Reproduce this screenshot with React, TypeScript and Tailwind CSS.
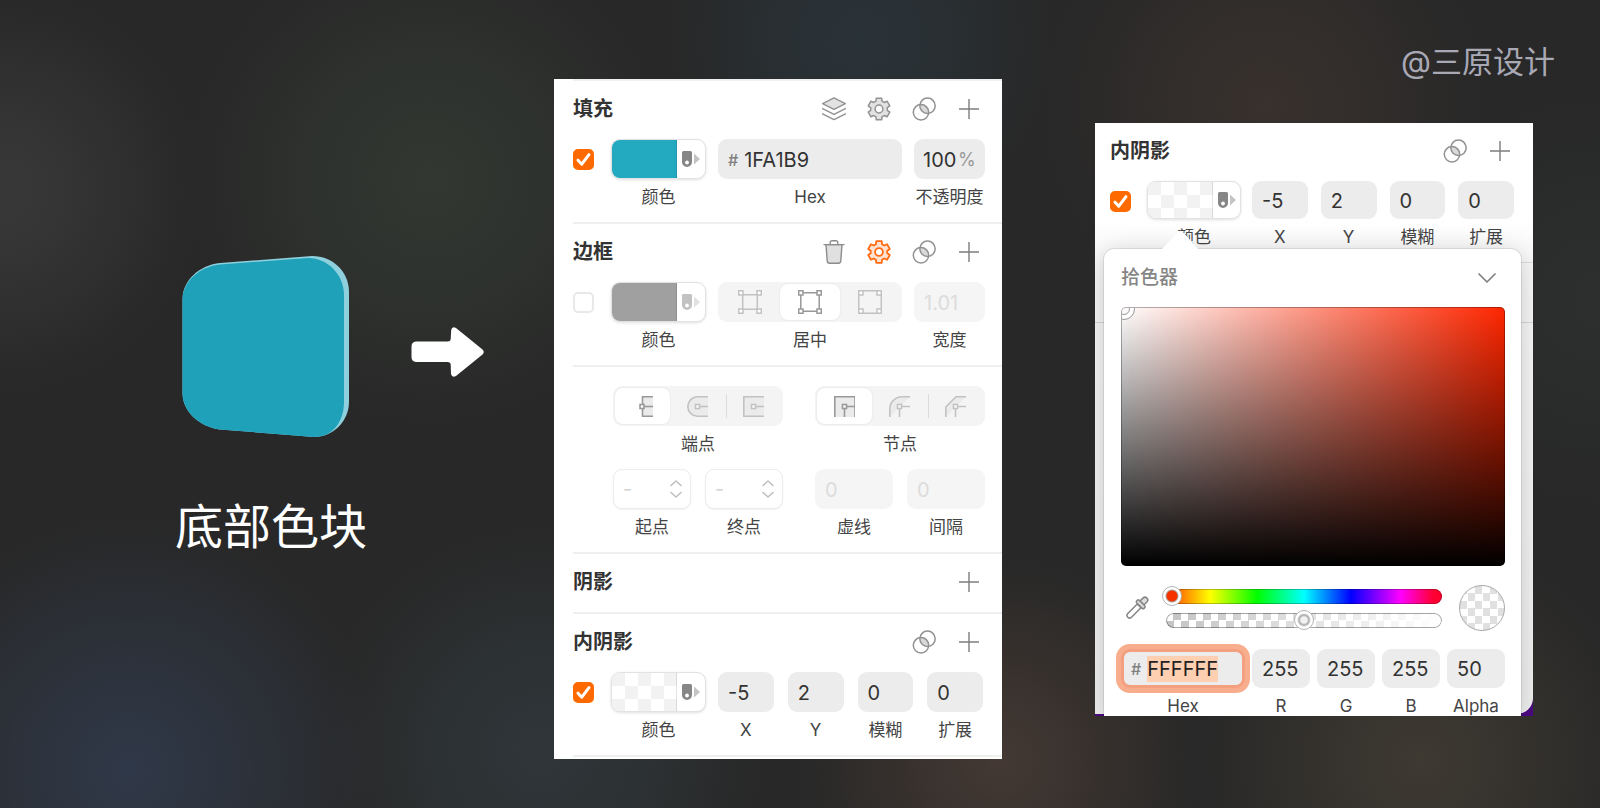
import type { ReactNode } from "react";
import clsx from "clsx";

const gearPath =
  Array.from({ length: 6 }, (_, i) =>
    [
      [-21, 8.4],
      [-14, 11.2],
      [14, 11.2],
      [21, 8.4]
    ]
      .map(([offset, radius], j) => {
        const angle = ((i * 60 + offset) * Math.PI) / 180;
        const x = (12 + Math.sin(angle) * radius).toFixed(2);
        const y = (12 - Math.cos(angle) * radius).toFixed(2);
        return `${i === 0 && j === 0 ? "M" : "L"}${x} ${y}`;
      })
      .join(" ")
  ).join(" ") + " Z";

function LayersIcon() {
  return (
    <svg viewBox="0 0 24 24" className="size-6" fill="none" stroke="#929292" strokeWidth="1.4" strokeLinejoin="round" strokeLinecap="round">
      <path d="M12 .8 23.4 6.6 12 12.4.6 6.6Z" fill="#e2e2e2" />
      <path d="M.6 11.6 12 17.4l11.4-5.800" />
      <path d="M.6 16.8 12 22.600l11.400-5.800" />
    </svg>
  );
}

function GearIcon({ active = false }: { active?: boolean }) {
  return (
    <svg
      viewBox="0 0 24 24"
      className={clsx("size-6", active ? "text-[#ff6a13]" : "text-[#929292]")}
      stroke="currentColor"
      strokeWidth={active ? 1.8 : 1.5}
      strokeLinejoin="round"
    >
      <path d={gearPath} fill={active ? "#ffe3d0" : "#e2e2e2"} />
      <circle cx="12" cy="12" r="3.9" fill="#fff" />
    </svg>
  );
}

function BlendIcon() {
  return (
    <svg viewBox="0 0 24 24" className="size-6" fill="none" stroke="#929292" strokeWidth="1.5">
      <path d="M7.9 7.7a7.700 7.700 0 0 1 8.700 8.700 7.700 7.700 0 0 1-8.700-8.700Z" fill="#d9d9d9" stroke="none" />
      <circle cx="15.500" cy="8.800" r="7.700" />
      <circle cx="9" cy="15.300" r="7.700" />
    </svg>
  );
}

function PlusIcon() {
  return (
    <svg viewBox="0 0 24 24" className="size-6" stroke="#7d7d7d" strokeWidth="1.4">
      <path d="M2 12h20M12 2v20" />
    </svg>
  );
}

function TrashIcon() {
  return (
    <svg viewBox="0 0 24 24" className="size-6" fill="none" stroke="#8c8c8c" strokeWidth="1.4" strokeLinejoin="round" strokeLinecap="round">
      <path d="M4 4.6h16l-1.2 16.2a2.4 2.4 0 0 1-2.4 2.4H7.6a2.4 2.4 0 0 1-2.4-2.4Z" fill="#e0e0e0" />
      <path d="M2 4.6h20M8.2 4.4V2.6A1.8 1.8 0 0 1 10 .8h4a1.8 1.8 0 0 1 1.8 1.8v1.8" />
    </svg>
  );
}

function StyleIcon() {
  return (
    <svg viewBox="0 0 18 18" className="size-[18px]">
      <path d="M0 2.5A1.5 1.5 0 0 1 1.5 1h7A1.5 1.5 0 0 1 10 2.5V12a5 5 0 0 1-10 0Z" fill="#868686" />
      <circle cx="5" cy="12.5" r="1.9" fill="#fff" />
      <path d="M12 3.5v11L18 9Z" fill="#c4c4c4" />
    </svg>
  );
}

// line: how far the frame sits from the outer edge of the corner nodes
function AlignIcon({ line }: { line: number }) {
  const far = 24 - line;
  return (
    <svg viewBox="0 0 24 24" className="size-6" fill="#fff" stroke="currentColor" strokeWidth="1.5">
      <path d={`M${line} ${line}H${far}V${far}H${line}Z`} fill="none" />
      <path d="M.7.7H5V5H.7ZM19 .7h4.3V5H19ZM.7 19H5v4.3H.7ZM19 19h4.3v4.3H19Z" />
    </svg>
  );
}

function EdgeIcon({ outline, node, lines }: { outline: string; node: [number, number]; lines: string }) {
  return (
    <svg viewBox="0 0 21 21" className="size-[21px]" fill="none" stroke="currentColor" strokeWidth="1.6">
      <path d={outline} fill="#ebebeb" />
      <path d={lines} />
      <rect x={node[0]} y={node[1]} width="4" height="4" fill="#fff" />
    </svg>
  );
}

const joinLines = "M12.5 10.500H21M10.500 12.500V21";

const capIcons = [
  { name: "平头", icon: <EdgeIcon outline="M21 .8H10.500v19.400H21" node={[8, 8.5]} lines="M12 10.500h9" /> },
  { name: "圆头", icon: <EdgeIcon outline="M21 .8H10.500a9.700 9.700 0 0 0 0 19.400H21" node={[8.5, 8.5]} lines="M12.500 10.500H21" /> },
  { name: "方头", icon: <EdgeIcon outline="M21 .8H.8v19.400H21" node={[8.5, 8.5]} lines="M12.500 10.500H21" /> }
];

const joinIcons = [
  { name: "尖角", icon: <EdgeIcon outline="M.8 21V.8H21V21" node={[8.5, 8.5]} lines={joinLines} /> },
  { name: "圆角", icon: <EdgeIcon outline="M.8 21V13A12.200 12.200 0 0 1 13 .8h8" node={[8.5, 8.5]} lines={joinLines} /> },
  { name: "斜角", icon: <EdgeIcon outline="M.8 21V11L11 .8h10" node={[8.5, 8.5]} lines={joinLines} /> }
];

const alignIcons = [
  { name: "内部", icon: <AlignIcon line={4.7} /> },
  { name: "居中", icon: <AlignIcon line={2.8} /> },
  { name: "外部", icon: <AlignIcon line={0.7} /> }
];

function Caption({ children }: { children: ReactNode }) {
  return (
    <span className="mt-2 block text-center text-[17px] leading-5 whitespace-nowrap text-[#444]">
      {children}
    </span>
  );
}

function SectionHeader({ title, children }: { title: string; children: ReactNode }) {
  return (
    <div className="flex h-6 items-center justify-between">
      <h2 className="text-xl leading-6 font-bold text-[#333]">{title}</h2>
      <div className="flex gap-[21px]">{children}</div>
    </div>
  );
}

function IconButton({ label, children }: { label: string; children: ReactNode }) {
  return (
    <button type="button" aria-label={label} className="size-6">
      {children}
    </button>
  );
}

function Tick({ label, checked = false }: { label: string; checked?: boolean }) {
  return (
    <span className="relative my-[10px] size-[21px] shrink-0">
      <input
        type="checkbox"
        aria-label={label}
        defaultChecked={checked}
        className="peer block size-[21px] appearance-none rounded-[5px] border-2 border-[#e8e8e8] bg-white checked:border-[#ff6a00] checked:bg-[#ff6a00]"
      />
      <svg
        viewBox="0 0 21 21"
        className="pointer-events-none absolute inset-0 hidden size-[21px] peer-checked:block"
        fill="none"
        stroke="#fff"
        strokeWidth="3"
        strokeLinecap="round"
        strokeLinejoin="round"
      >
        <path d="M5 11.2 8.8 15.2 16 5.6" />
      </svg>
    </span>
  );
}

function Swatch({ fill, compact = false, disabled = false }: { fill: string; compact?: boolean; disabled?: boolean }) {
  return (
    <label className={clsx("shrink-0", compact ? "w-[94px]" : "w-[95px]")}>
      <button
        type="button"
        disabled={disabled}
        className={clsx(
          "flex w-full overflow-hidden rounded-[9px] border border-[#e2e2e2] bg-white shadow-[0_1px_3px_rgba(0,0,0,0.12)]",
          compact ? "h-[38px]" : "h-10"
        )}
      >
        <span className={clsx("h-full w-[65px] border-r border-black/10", fill)} />
        <span className={clsx("flex h-full flex-1 items-center justify-center", disabled && "opacity-50")}>
          <StyleIcon />
        </span>
      </button>
      <Caption>颜色</Caption>
    </label>
  );
}

function NumberField({
  label,
  value,
  height = "h-10",
  disabled = false
}: {
  label: string;
  value: string;
  height?: string;
  disabled?: boolean;
}) {
  return (
    <label className="min-w-0">
      <input
        type="text"
        defaultValue={value}
        disabled={disabled}
        className={clsx(
          "block w-full rounded-[9px] px-[10px] pt-px text-xl",
          height,
          disabled ? "bg-[#f5f5f5] text-[#dcdcdc]" : "bg-[#ececec] text-[#333]"
        )}
      />
      <Caption>{label}</Caption>
    </label>
  );
}

function Segmented({
  name,
  label,
  options,
  selected,
  divided = false
}: {
  name: string;
  label: string;
  options: { name: string; icon: ReactNode }[];
  selected: number;
  divided?: boolean;
}) {
  return (
    <fieldset className="min-w-0">
      <div className="grid h-10 grid-cols-3 rounded-[9px] bg-[#f4f4f4] p-[2px]">
        {options.map((option, index) => (
          <label
            key={option.name}
            className={clsx(
              "relative flex items-center justify-center rounded-[8px]",
              index === selected ? "bg-white text-[#999] shadow-[0_0_2px_rgba(0,0,0,0.1)]" : "text-[#c2c2c2]"
            )}
          >
            <input type="radio" name={name} aria-label={option.name} defaultChecked={index === selected} className="sr-only" />
            {divided && index === 2 && <span className="absolute top-1/2 left-0 h-6 w-px -translate-y-1/2 bg-[#dcdcdc]" />}
            {option.icon}
          </label>
        ))}
      </div>
      <Caption>{label}</Caption>
    </fieldset>
  );
}

function ArrowSelect({ label }: { label: string }) {
  return (
    <label className="min-w-0">
      <span className="relative block">
        <select
          disabled
          className="block h-10 w-full appearance-none rounded-[9px] border border-[#ececec] bg-white px-[9px] text-xl text-[#d4d4d4] opacity-100 shadow-[0_1px_2px_rgba(0,0,0,0.06)]"
        >
          <option>-</option>
        </select>
        <svg
          viewBox="0 0 12 18"
          className="pointer-events-none absolute top-[11px] right-[9px] h-[18px] w-3"
          fill="none"
          stroke="#bdbdbd"
          strokeWidth="1.5"
          strokeLinecap="round"
          strokeLinejoin="round"
        >
          <path d="M1 5.500 6 1l5 4.500M1 12.500 6 17l5-4.500" />
        </svg>
      </span>
      <Caption>{label}</Caption>
    </label>
  );
}

const checker =
  "bg-[conic-gradient(#fff_25%,#f2f2f2_0_50%,#fff_0_75%,#f2f2f2_0)] bg-[length:26px_26px]";

const shadowFields = [
  { label: "X", value: "-5" },
  { label: "Y", value: "2" },
  { label: "模糊", value: "0" },
  { label: "扩展", value: "0" }
];

function InnerShadowRow({ compact = false }: { compact?: boolean }) {
  return (
    <div className={clsx("mt-[18px] flex items-start", compact ? "gap-[11px]" : "gap-3")}>
      <div className={clsx("flex items-start", compact ? "gap-4" : "gap-[17px]")}>
        <Tick label="内阴影" checked />
        <Swatch fill={checker} compact={compact} />
      </div>
      <div className={clsx("grid min-w-0 flex-1 grid-cols-4", compact ? "gap-[13px]" : "gap-[14px]")}>
        {shadowFields.map((field) => (
          <NumberField key={field.label} {...field} height={compact ? "h-[38px]" : "h-10"} />
        ))}
      </div>
    </div>
  );
}

function StylePanel() {
  return (
    <section className="bg-white pb-[2px] pl-[19px]">
      <div className="border-t-2 border-[#efefef] pt-4 pb-[15px]">
        <div className="pr-[21px]">
          <SectionHeader title="填充">
            <IconButton label="图层">
              <LayersIcon />
            </IconButton>
            <IconButton label="设置">
              <GearIcon />
            </IconButton>
            <IconButton label="混合">
              <BlendIcon />
            </IconButton>
            <IconButton label="添加">
              <PlusIcon />
            </IconButton>
          </SectionHeader>
        </div>
        <div className="mt-[18px] flex items-start gap-3 pr-[17px]">
          <div className="flex items-start gap-[17px]">
            <Tick label="填充" checked />
            <Swatch fill="bg-[#23a9c0]" />
          </div>
          <label className="min-w-0 flex-1">
            <span className="flex h-10 items-center gap-[6px] rounded-[9px] bg-[#ececec] px-[10px] pt-px">
              <span className="text-base font-medium text-[#808080]">#</span>
              <input type="text" defaultValue="1FA1B9" className="w-full min-w-0 text-xl text-[#333]" />
            </span>
            <Caption>Hex</Caption>
          </label>
          <label className="w-[71px]">
            <span className="flex h-10 items-center rounded-[9px] bg-[#ececec] pt-px pl-[9px]">
              <input type="text" defaultValue="100" className="w-[35px] text-xl text-[#333]" />
              <span className="text-lg text-[#999]">%</span>
            </span>
            <Caption>不透明度</Caption>
          </label>
        </div>
      </div>

      <div className="border-t-2 border-[#efefef] pt-4 pb-[15px]">
        <div className="pr-[21px]">
          <SectionHeader title="边框">
            <IconButton label="删除">
              <TrashIcon />
            </IconButton>
            <IconButton label="设置">
              <GearIcon active />
            </IconButton>
            <IconButton label="混合">
              <BlendIcon />
            </IconButton>
            <IconButton label="添加">
              <PlusIcon />
            </IconButton>
          </SectionHeader>
        </div>
        <div className="mt-[18px] flex items-start gap-3 pr-[17px]">
          <div className="flex items-start gap-[17px]">
            <Tick label="边框" />
            <Swatch fill="bg-[#a0a0a0]" disabled />
          </div>
          <div className="min-w-0 flex-1">
            <Segmented name="align" label="居中" options={alignIcons} selected={1} />
          </div>
          <div className="w-[71px]">
            <NumberField label="宽度" value="1.01" disabled />
          </div>
        </div>
      </div>

      <div className="border-t-2 border-[#efefef] pt-[19px] pr-[17px] pb-[15px] pl-10">
        <div className="grid grid-cols-2 gap-8">
          <Segmented name="cap" label="端点" options={capIcons} selected={0} divided />
          <Segmented name="join" label="节点" options={joinIcons} selected={0} divided />
        </div>
        <div className="mt-[15px] grid grid-cols-2 gap-8">
          <div className="grid grid-cols-2 gap-[14px]">
            <ArrowSelect label="起点" />
            <ArrowSelect label="终点" />
          </div>
          <div className="grid grid-cols-2 gap-[14px]">
            <NumberField label="虚线" value="0" disabled />
            <NumberField label="间隔" value="0" disabled />
          </div>
        </div>
      </div>

      <div className="border-t-2 border-[#efefef] pt-4 pr-[21px] pb-[18px]">
        <SectionHeader title="阴影">
          <IconButton label="添加">
            <PlusIcon />
          </IconButton>
        </SectionHeader>
      </div>

      <div className="border-y-2 border-[#efefef] pt-4 pb-[15px]">
        <div className="pr-[21px]">
          <SectionHeader title="内阴影">
            <IconButton label="混合">
              <BlendIcon />
            </IconButton>
            <IconButton label="添加">
              <PlusIcon />
            </IconButton>
          </SectionHeader>
        </div>
        <div className="pr-[19px]">
          <InnerShadowRow />
        </div>
      </div>
    </section>
  );
}

const sliderClass =
  "-mx-1 block h-[15px] w-[calc(100%+8px)] appearance-none bg-transparent [&::-webkit-slider-thumb]:size-5 [&::-webkit-slider-thumb]:appearance-none [&::-webkit-slider-thumb]:rounded-full [&::-webkit-slider-thumb]:border [&::-webkit-slider-thumb]:border-[#b4b4b4]";

const channels = [
  { label: "R", value: "255" },
  { label: "G", value: "255" },
  { label: "B", value: "255" },
  { label: "Alpha", value: "50" }
];

function ColorPicker() {
  return (
    <div className="relative mt-[2px] mr-3 ml-[9px] rounded-t-[10px] bg-white pt-4 pr-4 pl-[17px] shadow-[0_0_0_1px_rgba(0,0,0,0.08),0_4px_26px_rgba(0,0,0,0.2)]">
      <svg viewBox="0 0 38 20" className="absolute -top-[19px] left-[57px] h-5 w-[38px]" fill="#fff">
        <path d="M0 20 17.5 1.500Q19.500 0 21.500 1.500L38 20Z" />
      </svg>
      <div className="flex h-[26px] items-center justify-between pr-[9px]">
        <h3 className="text-[19px] font-medium text-[#858585]">拾色器</h3>
        <button type="button" aria-label="收起" className="flex h-6 w-[18px] items-center">
          <svg viewBox="0 0 18 10" className="h-[10px] w-[18px]" fill="none" stroke="#808080" strokeWidth="1.7" strokeLinecap="round" strokeLinejoin="round">
            <path d="M1 1l8 8 8-8" />
          </svg>
        </button>
      </div>

      <div className="relative mt-4 h-[259px] overflow-hidden rounded-[5px] border border-black/30 bg-[linear-gradient(to_top,#000,transparent),linear-gradient(to_right,#fff,#ff2600)] bg-origin-border">
        <svg viewBox="0 0 14 14" className="absolute top-0 left-0 size-[14px]" fill="none">
          <circle cx="2" cy="1" r="8" stroke="#fff" strokeWidth="4" />
          <circle cx="2" cy="1" r="10.5" stroke="#9a9a9a" />
          <circle cx="2" cy="1" r="5.5" stroke="#9a9a9a" />
        </svg>
      </div>

      <div className="mt-[19px] flex items-center gap-[17px] pl-1">
        <button type="button" aria-label="吸管" className="size-6">
          <svg viewBox="0 0 24 24" className="size-6" stroke="#858585" strokeWidth="1.5" strokeLinejoin="round">
            <g transform="rotate(45 12 12)">
              <path d="M9.4 9h5.200v13.400a2.600 2.600 0 0 1-5.200 0Z" fill="#fff" />
              <path d="M9.200 5V.8a2.800 2.800 0 0 1 5.600 0V5Z" fill="#dcdcdc" />
              <rect x="6.800" y="5" width="10.400" height="3.600" rx="1.300" fill="#dcdcdc" />
            </g>
          </svg>
        </button>
        <div className="flex min-w-0 flex-1 flex-col gap-[9px]">
          <div className="rounded-full bg-[linear-gradient(to_right,#ff2600,#ff8000_6%,#ff0_16%,#0f0_33%,#0ff_50%,#00f_67%,#f0f_85%,#ff0030_97%)] shadow-[inset_0_0_0_1px_rgba(0,0,0,0.25)]">
            <input
              type="range"
              aria-label="色相"
              min={0}
              max={360}
              defaultValue={0}
              className={clsx(
                sliderClass,
                "[&::-webkit-slider-thumb]:bg-[radial-gradient(circle,#f53200_5px,#aaa_6px,#fff_7px)]"
              )}
            />
          </div>
          <div className="rounded-full bg-[linear-gradient(to_right,transparent,#fff),conic-gradient(#c4c4c4_25%,#fff_0_50%,#c4c4c4_0_75%,#fff_0)] bg-[length:100%_100%,15px_15px] shadow-[inset_0_0_0_1px_rgba(0,0,0,0.35)]">
            <input
              type="range"
              aria-label="不透明度"
              min={0}
              max={100}
              defaultValue={50}
              className={clsx(
                sliderClass,
                "[&::-webkit-slider-thumb]:bg-[radial-gradient(circle,#f2f2f2_3px,#ccc_4px,#aaa_5px,#fff_7px)]"
              )}
            />
          </div>
        </div>
        <span className="size-[46px] rounded-full border border-[#a8a8a8] bg-[conic-gradient(#fff_25%,#e0e0e0_0_50%,#fff_0_75%,#e0e0e0_0)] bg-[length:15px_15px]" />
      </div>

      <div className="mt-[18px] grid grid-cols-[124px_1fr_1fr_1fr_1fr] gap-[7px]">
        <label className="relative z-10">
          <span className="flex h-[39px] items-center gap-[6px] rounded-[9px] border-[3px] border-[#f2a080] bg-[#ececec] pt-px pl-[7px] ring-[5px] ring-[#f8ad8d]">
            <span className="text-base font-medium text-[#808080]">#</span>
            <input
              type="text"
              defaultValue="FFFFFF"
              className="h-[26px] w-[71px] bg-[#ffcfb1] text-xl text-[#222]"
            />
          </span>
          <Caption>Hex</Caption>
        </label>
        {channels.map((channel) => (
          <NumberField key={channel.label} {...channel} height="h-[39px]" />
        ))}
      </div>
    </div>
  );
}

function ShadowPanel() {
  return (
    <section className="relative overflow-hidden bg-[#4b0a82]">
      <div className="absolute inset-x-0 top-0 bottom-[2px] rounded-br-[16px] bg-[linear-gradient(to_bottom,#fff_16%,#f8f8f8_24%,#f0f0f0)]">
        <div className="mt-[139px] ml-[15px] h-px bg-[#dedede]" />
        <div className="mt-[59px] h-px bg-[#d8d8d8]" />
      </div>
      <div className="relative">
        <div className="pt-4 pr-[21px] pl-[15px]">
          <SectionHeader title="内阴影">
            <IconButton label="混合">
              <BlendIcon />
            </IconButton>
            <IconButton label="添加">
              <PlusIcon />
            </IconButton>
          </SectionHeader>
        </div>
        <div className="pr-[19px] pl-[15px]">
          <InnerShadowRow compact />
        </div>
        <ColorPicker />
      </div>
    </section>
  );
}

export default function App() {
  return (
    <main className="grid min-h-screen grid-cols-[554fr_448fr_598fr] bg-[#282828] bg-[radial-gradient(circle_200px_at_0px_190px,#383838,#343434_35%,transparent),radial-gradient(circle_240px_at_430px_180px,#323732,#2f332f_40%,transparent),radial-gradient(circle_190px_at_860px_40px,#293237,#293034_35%,transparent),radial-gradient(circle_220px_at_1265px_105px,#38312e,#332e2c_35%,transparent),radial-gradient(circle_250px_at_130px_770px,#2f3848,#2d333d_40%,transparent),radial-gradient(circle_220px_at_540px_750px,#2f3639,#2d3234_40%,transparent),radial-gradient(circle_200px_at_1000px_760px,#443934,#39322e_40%,transparent),radial-gradient(circle_220px_at_1420px_760px,#3e3a32,#36332e_40%,transparent),radial-gradient(circle_200px_at_1600px_300px,#2d2f2f,transparent)] font-['Inter','Noto_Sans_CJK_SC',sans-serif]">
      <div className="flex items-start justify-end gap-[43px] pt-[255px] pr-[68px]">
        <figure className="w-48">
          <svg viewBox="0 0 192 184" className="h-[184px] w-48">
            <path
              d="M7.5 44C7.500 25 25 10 45 8L137 1C158 1 174 17 174 37V147C174 166 158 182 139 182L45 174.500C25 172 7.500 157 7.500 138Z"
              fill="#8fd0de"
            />
            <path
              d="M7.5 45C7.500 26 25 11.500 45 9.500L133 3C153 3 169 20 169 40V147C169 166 158 182 139 182L45 174.500C25 172 7.500 157 7.500 138Z"
              fill="#20a1ba"
            />
          </svg>
          <figcaption className="mt-14 text-center text-5xl leading-[64px] whitespace-nowrap text-white">
            底部色块
          </figcaption>
        </figure>
        <svg viewBox="0 0 76 50" className="mt-[72px] h-[50px] w-[76px]" fill="#fff">
          <path d="M6 14.5H37.500Q40.500 14.500 40.700 12L41.200 3Q42 -1 46 1L72.500 22.500Q75 25 72.500 27.500L46 49Q42 51 41 47L40.700 37.500Q40.500 35 37.500 35H6Q1.500 34.500 1.500 30V19.500Q1.500 15 6 14.500Z" />
        </svg>
      </div>

      <div className="pt-[79px]">
        <StylePanel />
      </div>

      <div className="flex flex-col pt-10">
        <p className="pr-[45px] text-right text-[31px] leading-[43px] text-[#a9a9b6]">@三原设计</p>
        <div className="mt-10 mr-[67px] ml-[93px]">
          <ShadowPanel />
        </div>
      </div>
    </main>
  );
}
